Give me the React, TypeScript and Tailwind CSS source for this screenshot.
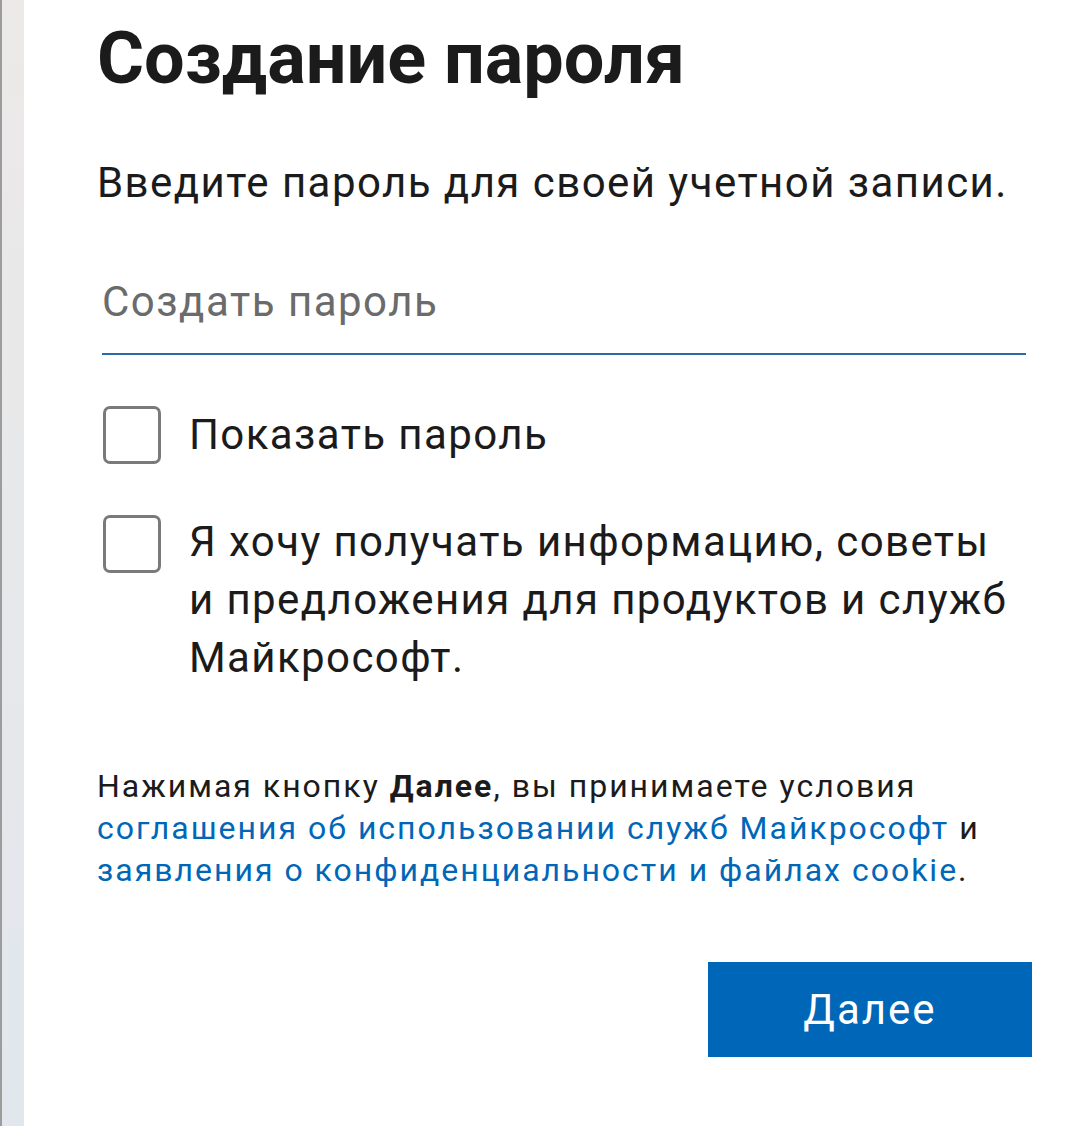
import React from "react";

export default function App() {
  const font = { fontFamily: "Roboto, 'Noto Sans', sans-serif" };
  return (
    <div className="flex min-h-[1126px] w-[1080px] bg-white" style={font}>
      <div className="flex w-[24px] shrink-0">
        <div className="w-[2px] bg-[#9c9c9c]" />
        <div className="flex-1 bg-gradient-to-b from-[#ece9e8] to-[#e1e7ec]" />
      </div>
      <div className="flex w-[1008px] flex-col pl-[73px] pt-[16px] text-[#1b1b1b]">
        <h1 className="text-[72px] font-bold leading-[86px]">Создание пароля</h1>
        <p className="mt-[56px] text-[42px] leading-[50px] tracking-[1.45px]">
          Введите пароль для своей учетной записи.
        </p>
        <div className="ml-[5px] mr-[6px] mt-[68px] border-b-2 border-[#2b6aa6] pb-[26px]">
          <input
            type="password"
            placeholder="Создать пароль"
            className="block h-[51px] w-full bg-transparent text-[42px] leading-[51px] tracking-[1.5px] text-[#1b1b1b] outline-none placeholder:text-[#6b6b6b]"
            style={font}
          />
        </div>
        <label className="mt-[51px] flex items-center gap-[28px] pl-[6px]">
          <span className="h-[58px] w-[58px] shrink-0 rounded-[7px] border-[3px] border-[#7a7a7a]" />
          <span className="text-[42px] leading-[58px] tracking-[1.4px]">Показать пароль</span>
        </label>
        <label className="mt-[51px] flex items-start gap-[28px] pl-[6px]">
          <span className="h-[58px] w-[58px] shrink-0 rounded-[7px] border-[3px] border-[#7a7a7a]" />
          <span className="-mt-[2px] max-w-[828px] text-[42px] leading-[58px] tracking-[1.4px]">
            Я хочу получать информацию, советы и предложения для продуктов и служб Майкрософт.
          </span>
        </label>
        <p className="mt-[78px] text-[32px] leading-[42px] tracking-[2px]">
          Нажимая кнопку <b className="font-bold">Далее</b>, вы принимаете условия{" "}
          <a className="text-[#0067b8]">соглашения об использовании служб Майкрософт</a> и{" "}
          <a className="text-[#0067b8]">заявления о конфиденциальности и файлах cookie</a>.
        </p>
        <div className="mt-[71px] flex justify-end">
          <button
            className="h-[95px] w-[324px] bg-[#0067b8] text-[42px] tracking-[2px] text-white"
            style={font}
          >
            Далее
          </button>
        </div>
      </div>
    </div>
  );
}
